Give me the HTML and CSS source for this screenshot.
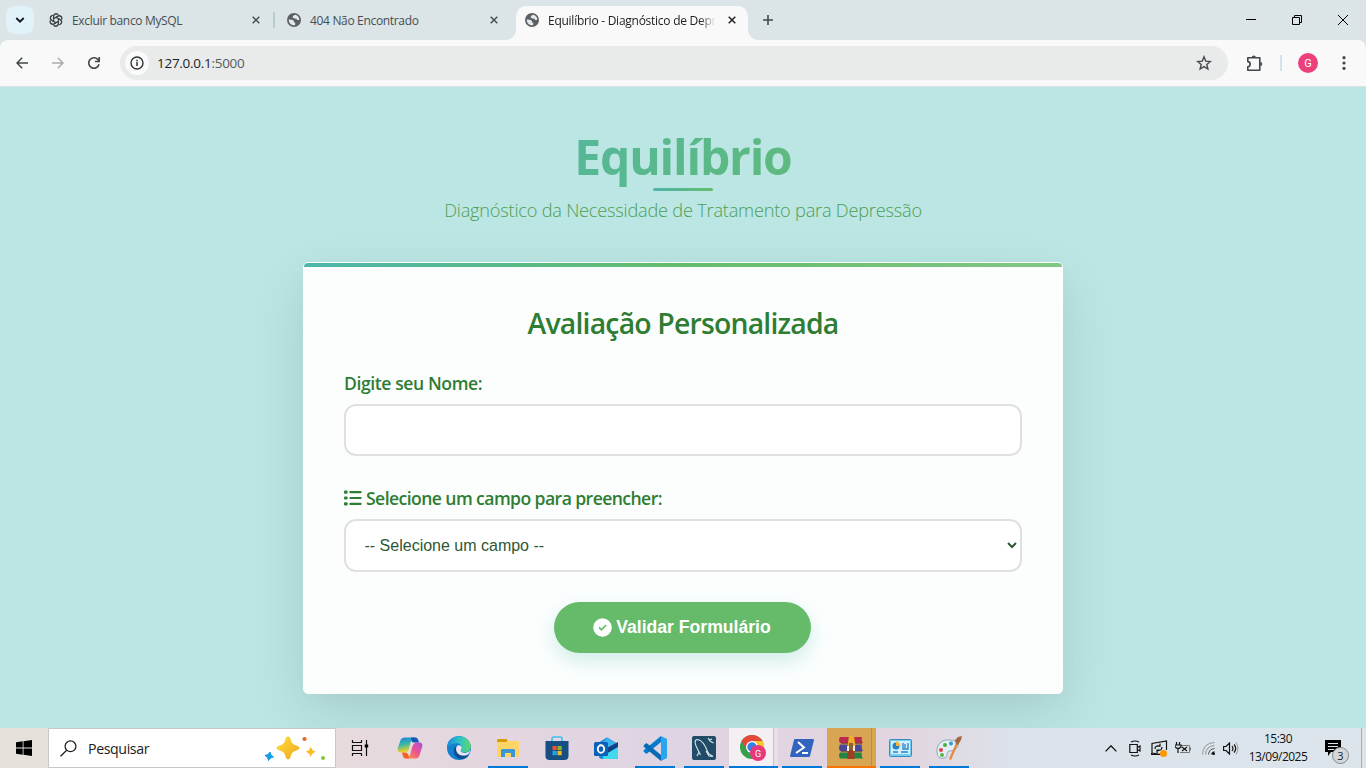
FILE: index.html
```html
<!DOCTYPE html>
<html lang="pt-BR">
<head>
<meta charset="utf-8">
<title>Equilíbrio - Diagnóstico de Depressão</title>
<link rel="stylesheet" href="styles.css">
</head>
<body>
<svg class="defs" width="0" height="0">
  <defs>
    <symbol id="globe" viewBox="0 0 14 14"><circle cx="7" cy="7" r="7" fill="#5c6064"/><path d="M8.2 1.7 6.2 2.8 5.6 4.6 7.5 5.4 9.6 5.7 10 7 12.2 7.1A5.3 5.3 0 0 0 8.2 1.7ZM1.7 6.6 5 6.7 7.1 7.9 6.8 9.3 8.3 10.1 8.1 12.2A5.4 5.4 0 0 1 1.7 6.6Z" fill="#e4eaeb"/></symbol>
    <symbol id="close" viewBox="0 0 8 8"><path d="m.7.7 6.6 6.6M7.3.7.7 7.3" stroke="currentColor" stroke-width="1.5"/></symbol>
  </defs>
</svg>

<header class="tabs">
  <button class="tab-search"><svg width="10" height="6" viewBox="0 0 10 6"><path d="m1.3 1 3.7 3.6L8.7 1" fill="none" stroke="#16191b" stroke-width="1.9"/></svg></button>
  <div class="tab tab-one">
    <svg width="14" height="14" viewBox="0 0 14 14"><g fill="none" stroke="#3b4043" stroke-width="1.05"><path id="petal" d="M4.500 8.500V3.300a2.700 2.700 0 0 1 5-1.300M4.500 5.700l4.300-2.500a2.700 2.700 0 0 1 4 2.300"/><use href="#petal" transform="rotate(60 7 7)"/><use href="#petal" transform="rotate(120 7 7)"/><use href="#petal" transform="rotate(180 7 7)"/><use href="#petal" transform="rotate(240 7 7)"/><use href="#petal" transform="rotate(300 7 7)"/></g></svg>
    <span class="tab-name">Excluir banco MySQL</span>
    <svg class="x" width="8" height="8"><use href="#close"/></svg>
  </div>
  <div class="tab tab-two">
    <svg width="14" height="14"><use href="#globe"/></svg>
    <span class="tab-name">404 Não Encontrado</span>
    <svg class="x" width="8" height="8"><use href="#close"/></svg>
  </div>
  <div class="tab tab-active">
    <svg width="14" height="14"><use href="#globe"/></svg>
    <span class="tab-name">Equilíbrio - Diagnóstico de Depr</span>
    <svg class="x" width="8" height="8"><use href="#close"/></svg>
  </div>
  <svg class="plus" width="10" height="10" viewBox="0 0 10 10"><path d="M5 0v10M0 5h10" stroke="#424a4d" stroke-width="1.6"/></svg>
  <div class="window-buttons">
    <svg width="10" height="10" viewBox="0 0 10 10"><path d="M0 4.5h10" stroke="#000"/></svg>
    <svg width="10" height="10" viewBox="0 0 10 10"><path d="M.5 2.5h7v7h-7zM2.500 2.500V.5h7v7H7.500" fill="none" stroke="#000"/></svg>
    <svg width="10" height="10" viewBox="0 0 10 10"><path d="m0 0 10 10M10 0 0 10" stroke="#000"/></svg>
  </div>
</header>

<div class="toolbar-backdrop">
<nav class="toolbar">
  <svg width="12" height="12" viewBox="0 0 12 12"><path d="M12 6H1M6.200.8 1 6l5.200 5.200" fill="none" stroke="#40484b" stroke-width="1.5"/></svg>
  <svg width="12" height="12" viewBox="0 0 12 12"><path d="M0 6h11M5.800.8 11 6l-5.200 5.200" fill="none" stroke="#a9adae" stroke-width="1.5"/></svg>
  <svg width="12" height="12" viewBox="0 0 12 12"><path d="M11 7.200A5.200 5.200 0 1 1 9.800 2.500L11 3.800M11.200 0v4.500H6.900" fill="none" stroke="#40484b" stroke-width="1.600"/></svg>
  <div class="address">
    <span class="info"><svg width="14" height="14" viewBox="0 0 14 14"><circle cx="7" cy="7" r="6" fill="none" stroke="#303538" stroke-width="1.400"/><path d="M7 6v4M7 3.700v1.500" stroke="#303538" stroke-width="1.500"/></svg></span>
    <span class="url">127.0.0.1<i>:5000</i></span>
    <svg class="star" width="16" height="16" viewBox="0 0 16 16"><path d="m8 1.800 1.700 4.300 4.600.4-3.500 3 1.100 4.500L8 11.600 4.100 14l1.100-4.500-3.500-3 4.600-.4Z" fill="none" stroke="#454c50" stroke-width="1.400"/></svg>
  </div>
  <svg class="puzzle" width="17" height="17" viewBox="0 0 17 17"><path d="M1.800 2.800h12v12.400h-12v-3.500c3.200-.3 3.200-4.800 0-5.100Z" fill="none" stroke="#40484b" stroke-width="1.600" stroke-linejoin="round"/><path d="M5.800 2.500a2 2 0 0 1 4 0ZM14.300 7a2 2 0 0 1 0 4Z" fill="#40484b"/></svg>
  <span class="divider"></span>
  <span class="avatar">G</span>
  <svg width="4" height="14" viewBox="0 0 4 14"><g fill="#40484b"><circle cx="2" cy="1.700" r="1.600"/><circle cx="2" cy="7" r="1.600"/><circle cx="2" cy="12.300" r="1.600"/></g></svg>
</nav>
</div>

<main class="page">
  <h1>Equilíbrio</h1>
  <span class="title-rule"></span>
  <p class="subtitle">Diagnóstico da Necessidade de Tratamento para Depressão</p>
  <form class="card">
    <div class="card-rule"></div>
    <h2>Avaliação Personalizada</h2>
    <label class="label-name" for="nome">Digite seu Nome:</label>
    <input id="nome" type="text">
    <label class="label-field" for="campo"><svg width="18" height="16" viewBox="0 0 18 16"><g fill="#2e7d32"><rect y=".6" width="3.600" height="3.200" rx="1"/><rect y="6.400" width="3.600" height="3.200" rx="1"/><rect y="12.200" width="3.600" height="3.200" rx="1"/><rect x="5.300" y="1.100" width="12.300" height="2.200" rx="1"/><rect x="5.300" y="6.900" width="12.300" height="2.200" rx="1"/><rect x="5.300" y="12.700" width="12.300" height="2.200" rx="1"/></g></svg><span>Selecione um campo para preencher:</span></label>
    <select id="campo"><option>-- Selecione um campo --</option></select>
    <button class="submit" type="button"><svg width="19" height="19" viewBox="0 0 19 19"><circle cx="9.500" cy="9.500" r="9.300" fill="#fff"/><path d="m6 9.400 2.500 2.400L13.200 7" fill="none" stroke="#66bb6a" stroke-width="1.700"/></svg><span>Validar Formulário</span></button>
  </form>
</main>

<footer class="taskbar">
  <div class="start"><svg width="16" height="16" viewBox="0 0 16 16"><path d="M0 2.200 6.700 1.300v6.300H0ZM7.500 1.200 16 0v7.600H7.500ZM0 8.400h6.700v6.300L0 13.800ZM7.500 8.400H16V16l-8.500-1.200Z"/></svg></div>
  <div class="search">
    <svg width="17" height="17" viewBox="0 0 17 17"><circle cx="10.500" cy="6.300" r="5.400" fill="none" stroke="#222" stroke-width="1.300"/><path d="M6.700 10.200.5 16.300" stroke="#222" stroke-width="1.300"/></svg>
    <span>Pesquisar</span>
    <svg class="sparkles" width="62" height="26" viewBox="0 0 62 26"><defs><linearGradient id="gold" x1="0" y1="0" x2="1" y2="1"><stop stop-color="#ffe03c"/><stop offset="1" stop-color="#f0a51c"/></linearGradient></defs><path d="M24 1.500c1.500 0 2 .8 2.500 2.500 1.200 4.500 2.500 5.500 6.500 6.800 3.200 1 3.200 3.400 0 4.400-4 1.200-5.200 2.200-6.400 6.600-1 3.500-4 3.500-5 0-1.200-4.400-2.400-5.400-6.600-6.600-3.200-1-3.200-3.400 0-4.400 4.200-1.300 5.400-2.300 6.600-6.800.4-1.700 1-2.500 2.400-2.500Z" fill="url(#gold)"/><path d="M46.800 11.500c1.200 3.500 1.700 4 5.200 5.300-3.500 1.300-4 2-5.200 5.300-1.200-3.300-1.800-4-5.300-5.300 3.500-1.300 4.100-1.800 5.300-5.300Z" fill="#f5bd27"/><path d="m6 17 1 3 2.500 2-3 1-2 2.500-1-3L1 20.500l3-1Z" fill="#149fe6" stroke="#149fe6"/><circle cx="40.500" cy="4" r="2.100" fill="#eb6228"/><circle cx="59" cy="23" r="2" fill="#80c83b"/></svg>
  </div>
  <div class="apps">
    <div class="app"><svg width="18" height="16" viewBox="0 0 18 16"><path d="M1.500 0v2.500h9V0M1.500 16v-2.500h9V16M1.500 5.500h9v5h-9zM15.500 0v16" fill="none" stroke="#111" stroke-width="1.200"/><path d="M13.700 4.500h3.500v3h-3.500z"/></svg></div>
    <div class="app"><svg width="26" height="24" viewBox="0 0 26 24"><defs><linearGradient id="copA" x1="0" y1="0" x2=".2" y2="1"><stop stop-color="#1686e8"/><stop offset=".5" stop-color="#3bb7a5"/><stop offset="1" stop-color="#f8d120"/></linearGradient><linearGradient id="copB" x1="1" y1="0" x2="0" y2="1"><stop stop-color="#a451dd"/><stop offset=".5" stop-color="#ee558c"/><stop offset="1" stop-color="#ff9a43"/></linearGradient></defs><path d="M8 1.500h10c-3 1-4 3-5 7l-1 4c-1 3-2 4-5 4H4c-3 0-4-2-3-5l2-6c1-3 2-4 5-4Z" fill="url(#copA)"/><path d="M14 1.500h4c2 0 3 1 4 5h-5c-2 0-3-1-3-5Z" fill="#1659b5"/><path d="M18 22.500H9c3-1 4-3 5-7l1-4c1-3 2-5 5-5h2c3 0 4 2 3 5l-2 6c-1 4-2 5-5 5Z" fill="url(#copB)"/><path d="M12 22.500H9c-2 0-3-1-4-6h3c3 0 4 3 4 6Z" fill="#f0642c"/></svg></div>
    <div class="app"><svg width="24" height="24" viewBox="0 0 24 24"><defs><linearGradient id="edgeA"><stop stop-color="#168cdc"/><stop offset=".55" stop-color="#2fc4c4"/><stop offset="1" stop-color="#62da61"/></linearGradient></defs><circle cx="12" cy="12" r="12" fill="#157fd0"/><path d="M.3 9.500C2-2 20-3.500 23.500 8.500c1.200 5-2 8-6 8-3 0-5-1-4-2.500 3-4-1-7.500-5-6.500C4 8 1 9.500.3 13Z" fill="url(#edgeA)"/><path d="M9 10c-5 5-1 13 6 13 3 0 5-1.500 7-4-7 3-13-1-13-9Z" fill="#0c4e91"/><path d="M10 10c3-2 6 1 4 3.500-1.500 2.500 2 4 5 3.200 2-.4 3.500-1.400 4.500-2.700-1 4-4 6-8 5.500-5-.5-8-5-5.500-9.500Z" fill="#f0e5eb"/></svg></div>
    <div class="app open"><svg width="22" height="20" viewBox="0 0 22 20"><path d="M0 2.500C0 1 1 1 2 1h8l1.500 2H22v15c0 1-1 1-2 1H2c-1 0-2 0-2-1Z" fill="#ffd467"/><path d="M1 1h8.500l1 1.500-1 1.500H0V2Z" fill="#d79b08"/><path d="M4 19v-7c0-1 1-1 1-1h12s1 0 1 1v7h-4v-4H8v4Z" fill="#3c96d4"/></svg></div>
    <div class="app"><svg width="24" height="24" viewBox="0 0 24 24"><path d="M7 8V2.500Q7 1 8.500 1h7Q17 1 17 2.500V8" fill="none" stroke="#43c1ec" stroke-width="1.700"/><path d="M.5 5h23v15q0 4-4 4h-15q-4 0-4-4Z" fill="#174f83"/><path d="M7.500 10h4.200v4.200H7.500z" fill="#f2512b"/><path d="M12.500 10h4.200v4.200h-4.200z" fill="#81ba2e"/><path d="M7.500 15h4.200v4.200H7.500z" fill="#20a5e9"/><path d="M12.500 15h4.200v4.200h-4.200z" fill="#ffba18"/></svg></div>
    <div class="app"><svg width="24" height="22" viewBox="0 0 24 22"><path d="M4 6 12 1q1-.8 2 0l10 6v13q0 2-2 2H8q-3 0-3-3Z" fill="#148bd8"/><path d="m13 1 10 5.500-10 7L6 8Z" fill="#3bb3ed"/><path d="m11 12 13-7v5l-12 7Z" fill="#133f86"/><path d="m24 10-15 9v3h13q2 0 2-2Z" fill="#41d7ec"/><rect y="5" width="14" height="14" rx="1.500" fill="#0b61b8"/><ellipse cx="7" cy="12" rx="3.200" ry="3.800" fill="none" stroke="#fff" stroke-width="1.900"/></svg></div>
    <div class="app open"><svg width="25" height="25" viewBox="0 0 25 25"><path d="m18 0 6 3v19l-6 3Z" fill="#29a4ee"/><path d="M18 0v6L3.500 18 1 16Q0 15 1 14Z" fill="#087bcd"/><path d="M18 25v-6L3.500 7 1 9Q0 10 1 11Z" fill="#086bb3"/></svg></div>
    <div class="app open"><svg width="24" height="24" viewBox="0 0 24 24"><rect width="24" height="24" rx="2" fill="#214b67"/><path d="M5 20 7 16 5 12C3 8 2 4 5 3.500c3 0 6 3 8 6.500 2 3 2 6 4 8l4 2.500-4-.5-3-5M7 16l1.500 3M16 2l2 3 3.500 2M17 4l3-1" fill="none" stroke="#d6e5ed" stroke-width="1.100"/></svg></div>
    <div class="app current"><svg width="26" height="26" viewBox="0 0 26 26"><circle cx="12" cy="12" r="12" fill="#38a04c"/><path d="M1.600 6A12 12 0 0 1 22.400 6H12l-5 9Z" fill="#e5473b"/><path d="M12 6h10.400A12 12 0 0 1 12 24l5.200-9Z" fill="#f9ca24"/><circle cx="12" cy="12" r="6" fill="#fff"/><circle cx="12" cy="12" r="4.700" fill="#347fe8"/><circle cx="18" cy="18" r="8" fill="#e8387b"/><text x="18" y="21.500" class="badge-letter">G</text></svg></div>
    <div class="app open"><svg width="24" height="18" viewBox="0 0 24 18"><path d="M5 0h18q1 0 1 1l-4 16q0 1-1 1H1q-1 0-1-1L4 1q0-1 1-1Z" fill="#3164be"/><path d="m8 3 6 5.500L6 14M12 14h6" fill="none" stroke="#fff" stroke-width="2"/></svg></div>
    <div class="app attention"><svg width="24" height="24" viewBox="0 0 24 24"><path d="M1 1h22q-1 3 1 6H1q-2-3 0-6Z" fill="#b92a50"/><path d="M1 8.500h22q-1 3 1 6.500H1q-2-3 0-6.500Z" fill="#4a4796"/><path d="M1 16.500h22q-1 3 1 6H1q-2-3 0-6Z" fill="#238545"/><path d="M2 7.500h21M2 15.500h21" stroke="#6b4a45" stroke-width=".8"/><path d="M8.500 1h7v22h-7z" fill="#9b4121"/><path d="M10 0h5l1.500 10h-8Z" fill="#efaa31"/><path d="M8 10h2v5H8zM14 10h2v5h-2z" fill="#eee"/><path d="M10 7h4v7h-4z" fill="#8d6132"/></svg></div>
    <div class="app open"><svg width="23" height="18" viewBox="0 0 23 18"><rect x=".5" y=".5" width="22" height="17" rx="1" fill="#75cdf4" stroke="#388bbd"/><path d="M2 2h19v13H2z" fill="#d1f0fc"/><circle cx="7" cy="7" r="3.500" fill="#2483ce"/><path d="M7 7V2.500A4.500 4.500 0 0 1 11.500 7Z" fill="#f7b43c"/><path d="M14 4v6h5V4M16 5v4M4 13h5M12 13h7" fill="none" stroke="#2483ce" stroke-width="1.300"/></svg></div>
    <div class="app open"><svg width="26" height="25" viewBox="0 0 26 25"><path d="M13 4C6 3 0 9 1 16c0 6 5 8 9 5 2-2 0-5 3-6 4 0 9-2 9-6 0-3-4-5-9-5Z" fill="#e3edf3" stroke="#8da9bd"/><circle cx="5" cy="14" r="2" fill="#dd4245"/><circle cx="9" cy="9" r="2" fill="#50ad44"/><circle cx="15" cy="7.500" r="2" fill="#3299d6"/><circle cx="6" cy="19" r="2" fill="#59b749"/><path d="m13 23 7-16 2 1-7 16Z" fill="#e58b35"/><path d="m20 8-1-4 3-3 4-1-1 4-3 5Z" fill="#a26a42"/></svg></div>
  </div>
  <div class="tray">
    <svg width="12" height="7" viewBox="0 0 12 7"><path d="m.6 6.400 5.400-5.600 5.400 5.600" fill="none" stroke="#111" stroke-width="1.300"/></svg>
    <svg width="12" height="17" viewBox="0 0 12 17"><path d="M.8 4.500h7.500v8H.8zM8.300 7.500 11 6v5L8.300 9.500M2 2q4-2 8 0M2 15q4 2 8 0" fill="none" stroke="#111" stroke-width="1.200"/></svg>
    <svg width="17" height="17" viewBox="0 0 17 17"><path d="M10 14.500 1 13V3.500L15.500 1v9M1 13l-1 1.500h9M4 9q0-4 5-3M9 3.500V6.200H6.500M11 7q0 4-5 3.500M6 13v-3h3" fill="none" stroke="#111" stroke-width="1.200"/><circle cx="12.500" cy="13.500" r="3.500" fill="#ff9800"/></svg>
    <svg width="16" height="12" viewBox="0 0 16 12"><path d="M5.500 3.500h9v7H5M15.500 5.500v3" fill="none" stroke="#777"/><path d="M1.500 0v3M4.500 0v3M0 3h6v2q-3 3-6 0ZM3 6v5M7 5l5 4M12 5 7 9" fill="none" stroke="#111" stroke-width="1.200"/></svg>
    <svg width="13" height="13" viewBox="0 0 13 13"><path d="M.5 12.500Q1 1 12.500.5M3.500 12.500Q4 4 12.500 3.500" fill="none" stroke="#909396"/><path d="M6.500 12.500Q7 7 12.500 6.500M9 12.500Q9.500 10 12.500 9.500" fill="none" stroke="#555"/><circle cx="11.500" cy="11.500" r="1.500"/></svg>
    <svg width="16" height="13" viewBox="0 0 16 13"><path d="M.6 4.500H3L6.500 1v11L3 8.500H.6ZM9 4q2 2.500 0 5M11 2.500q3.500 4 0 8" fill="none" stroke="#111" stroke-width="1.200"/><path d="M13 .5q4 6 0 12" fill="none" stroke="#999"/></svg>
    <div class="clock"><span class="time">15:30</span><span class="date">13/09/2025</span></div>
    <div class="notice"><svg width="16" height="16" viewBox="0 0 16 16"><path d="M0 0h16v12H6l-3 4v-4H0Z"/><path d="M3 3.500h10M3 6.500h10M3 9.500h6" stroke="#e1e6eb"/></svg><b>3</b></div>
    <span class="desktop-edge"></span>
  </div>
</footer>
</body>
</html>
```
FILE: styles.css
```css
* { box-sizing: border-box; }
html, body { height: 100%; }
body {
  margin: 0;
  display: flex;
  flex-direction: column;
  overflow: hidden;
  background: #f9f9f9;
  color: #202124;
  font-family: "Open Sans", "Noto Sans", sans-serif;
}
svg { display: block; flex: none; }
.defs { position: absolute; }

/* Tab strip */
.tabs { height: 40px; display: flex; align-items: center; background: #dbe4e6; padding-left: 6px; flex: none; }
.tab-search { width: 28px; height: 28px; border: 0; padding: 0; border-radius: 9px; background: #e1f3f8; display: grid; place-items: center; }
.tab { display: flex; align-items: center; height: 40px; font-size: 12px; color: #474f53; white-space: nowrap; }
.tab-name { flex: 1; margin: 0 0 0 9px; letter-spacing: -.33px; }
.tab-one { width: 226px; margin-left: 15px; background: linear-gradient(#b9cdd1, #b9cdd1) right center / 2px 16px no-repeat; }
.tab-one .x { margin-right: 15px; }
.tab-two { width: 223px; margin-left: 12px; }
.tab-two .x { margin-right: 12px; }
.tab-active { width: 232px; height: 34px; align-self: flex-end; margin-left: 6px; padding: 0 12px 0 9px; background: #f9f9f9; border-radius: 10px 10px 0 0; color: #202326; position: relative; }
.tab-active::before, .tab-active::after { content: ""; position: absolute; bottom: 0; width: 10px; height: 10px; }
.tab-active::before { left: -10px; background: radial-gradient(circle at 0 0, transparent 9.500px, #f9f9f9 10px); }
.tab-active::after { right: -10px; background: radial-gradient(circle at 100% 0, transparent 9.500px, #f9f9f9 10px); }
.tab-active svg { margin-top: -6px; }
.tab-active .tab-name { margin: -5px 11px 0 9px; letter-spacing: -.26px; mask-image: linear-gradient(90deg, #000 90%, transparent 99%); }
.plus { margin-left: 15px; }
.window-buttons { display: flex; gap: 36px; margin-left: auto; padding-right: 18px; }

/* Toolbar */
.toolbar-backdrop { flex: none; background: #dbe4e6; }
.toolbar { height: 47px; display: flex; align-items: center; padding: 0 20px 1px 16px; background: #f9f9f9; border-radius: 8px 8px 0 0; box-shadow: inset 0 -1px #dce2e2; }
.toolbar > svg:nth-child(2), .toolbar > svg:nth-child(3) { margin-left: 24px; }
.address { display: flex; align-items: center; width: 1108px; height: 34px; margin-left: 20px; padding: 0 16px 0 5px; border-radius: 17px; background: #e8ebea; }
.info { width: 24px; height: 24px; border-radius: 50%; background: #fafafa; display: grid; place-items: center; }
.url { margin-left: 8px; font-size: 13.500px; letter-spacing: -.28px; color: #202326; }
.url i { color: #555d61; font-style: normal; }
.star { margin-left: auto; }
.puzzle { margin-left: 18px; }
.divider { width: 2px; height: 16px; margin-left: 17px; background: #cfe5e9; }
.avatar { width: 20px; height: 20px; margin: 0 24px 0 16px; border-radius: 50%; background: #ec407a; color: #fff; display: grid; place-items: center; font: 11px Roboto, sans-serif; }

/* Page */
.page { flex: 1; min-height: 0; display: flex; flex-direction: column; align-items: center; background: #bbe6e4; overflow: hidden; }
h1 { width: 560px; height: 64px; margin: 38px 0 0; text-align: center; font-size: 48px; line-height: 64px; font-weight: 700; letter-spacing: -1.200px; color: transparent; background: linear-gradient(135deg, #4db6ac, #66bb6a); background-clip: text; -webkit-background-clip: text; white-space: nowrap; }
.title-rule { width: 60px; height: 3px; margin-top: -1px; flex: none; border-radius: 2px; background: linear-gradient(90deg, #4db6ac, #66bb6a); }
.subtitle { margin: 5px 0 0; height: 28px; line-height: 28px; font-size: 18.200px; font-weight: 300; color: #4e9e55; letter-spacing: -.22px; white-space: nowrap; }
.card { display: flex; flex-direction: column; align-items: stretch; flex: none; width: 760px; height: 432px; margin-top: 38px; padding: 0 40px; border: 1px solid #fafefe; border-radius: 5px; background: #fcfefe; box-shadow: 0 20px 60px rgba(0, 0, 0, .1), 0 8px 25px rgba(0, 0, 0, .025); overflow: hidden; }
.card-rule { height: 4px; margin: 0 -40px; flex: none; background: linear-gradient(90deg, #4db6ac, #66bb6a 50%, #81c784); }
h2 { margin: 36px 0 0; height: 40px; line-height: 40px; text-align: center; color: #2e7d32; font-size: 28.400px; font-weight: 600; letter-spacing: -.82px; }
label { height: 24px; line-height: 24px; color: #2e7d32; font-size: 17.600px; font-weight: 600; white-space: nowrap; }
.label-name { margin-top: 28px; letter-spacing: -.42px; }
input, select { width: 678px; height: 52px; border: 2px solid #e0e0e0; border-radius: 12px; background: #fff; flex: none; }
input { margin: 9px 0 0; }
.label-field { display: flex; align-items: center; gap: 4px; margin-top: 30px; letter-spacing: -.58px; }
select { height: 53px; margin: 9px 0 0; padding: 0 0 0 14.500px; color: #2e5733; font: 16px "Liberation Sans", Arial, sans-serif; }
.submit { display: flex; align-items: center; justify-content: center; gap: 4px; align-self: center; flex: none; width: 257px; height: 51px; margin: 30px 1px 0 0; padding: 0 1px 0 0; border: 0; border-radius: 26px; background: #66bb6a; color: #fff; box-shadow: 0 8px 20px rgba(77, 182, 172, .25); font: bold 17.600px "Liberation Sans", Arial, sans-serif; }

/* Taskbar */
.taskbar { height: 40px; flex: none; display: flex; background: linear-gradient(90deg, #e6e1db 0, #e8dddd 22%, #e5d7df 32%, #dfd4e2 48%, #e2d5df 66%, #dce3eb 75%, #dce5eb 100%); }
.start { width: 48px; display: grid; place-items: center; }
.search { width: 288px; display: flex; align-items: center; padding: 0 9px 0 11px; background: #fff; border: 1px solid #c8c8c8; font-size: 14.200px; letter-spacing: -.4px; }
.search span { margin-left: 11px; }
.sparkles { margin-left: auto; }
.apps { display: flex; flex: none; width: 637px; margin-right: 1px; margin-left: .5px; }
.app { flex: 1; display: grid; place-items: center; }
.app:first-child svg { margin-right: 2px; }
.open { background: linear-gradient(#0078d7, #0078d7) center bottom / 40px 2px no-repeat; }
.current { border-bottom: 2px solid #0078d7; padding-top: 2px; background: linear-gradient(90deg, #f3eff2 0 44px, #c9c0c9 44px 45px, #e9e0e7 45px); }
.attention { border-bottom: 2px solid #f97300; padding-top: 2px; background: linear-gradient(90deg, #d8a553 0 44px, #b98c47 44px 45px, #d8a553 45px); }
.badge-letter { fill: #fff; font: 9px Roboto, sans-serif; text-anchor: middle; }
.tray { display: flex; align-items: center; flex: 1; padding-left: 130.500px; }
.tray > svg:nth-child(2) { margin-left: 12px; }
.tray > svg:nth-child(3) { margin-left: 10px; }
.tray > svg:nth-child(4) { margin-left: 7px; }
.tray > svg:nth-child(5) { margin-left: 11px; }
.tray > svg:nth-child(6) { margin-left: 8px; }
.clock { display: flex; flex-direction: column; align-items: center; width: 78px; font-size: 12px; line-height: 18px; letter-spacing: -.5px; color: #111; padding-bottom: 1px; }
.notice { position: relative; margin-left: 8px; }
.notice b { position: absolute; left: 7px; top: 7px; width: 17px; height: 17px; border: 1px solid #85898c; border-radius: 50%; background: #d4d8db; font: 11px/15px "Open Sans", sans-serif; text-align: center; }
.desktop-edge { width: 1px; height: 40px; margin-left: auto; margin-right: 4px; background: #a5afb6; }
```
